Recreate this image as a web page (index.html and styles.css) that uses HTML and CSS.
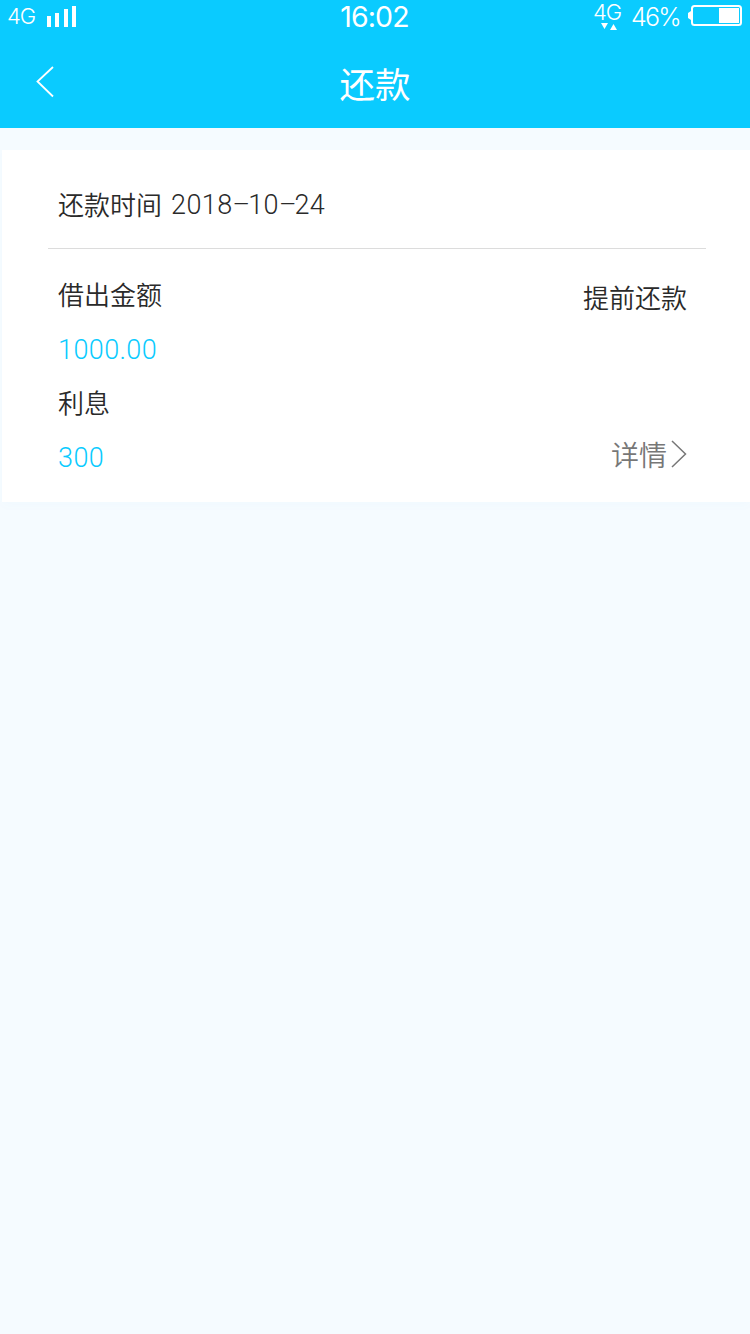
FILE: index.html
```html
<!DOCTYPE html>
<html lang="zh-CN">
<head>
<meta charset="utf-8">
<title>还款</title>
<link rel="stylesheet" href="styles.css">
</head>
<body>
<header class="header">
  <div class="status">
    <div class="status-left">
      <span class="carrier">4G</span>
      <svg class="signal" width="29" height="21" viewBox="0 0 29 21" fill="#fff"><path d="M0 10h4v11H0zM8 7h4v14H8zM17 3h4v18h-4zM25 0h4v21h-4z"/></svg>
    </div>
    <span class="clock">16:02</span>
    <div class="status-right">
      <div class="network">
        <span class="network-label">4G</span>
        <svg class="arrows" width="16" height="7" viewBox="0 0 16 7" fill="#fff"><path d="M0 0h7L3.500 6zM9 7h7L12.500 1z"/></svg>
      </div>
      <span class="percent">46%</span>
      <svg class="battery" width="54" height="21" viewBox="0 0 54 21"><rect x="4" y="1" width="49" height="19" rx="2.500" fill="none" stroke="#fff" stroke-width="2"/><path d="M31 3h20v15H31zM3 6v9L0 13V8z" fill="#fff"/></svg>
    </div>
  </div>
  <div class="navbar">
    <svg class="back" width="18" height="32" viewBox="0 0 18 32" fill="none" stroke="#fff" stroke-width="1.800"><path d="M17 1L1.500 15.500L17 30.500"/></svg>
    <h1 class="title">还款</h1>
  </div>
</header>
<main class="card">
  <div class="date-row"><span>还款时间</span><span class="num date">2018<span class="dash">–</span>10<span class="dash">–</span>24</span></div>
  <div class="details">
    <div class="amounts">
      <div class="label">借出金额</div>
      <div class="value num">1000.00</div>
      <div class="label">利息</div>
      <div class="value num">300</div>
    </div>
    <div class="actions">
      <div class="repay">提前还款</div>
      <div class="more">详情<svg class="chevron" width="16" height="28" viewBox="0 0 16 28" fill="none" stroke="#777" stroke-width="1.500"><path d="M1 1L14.500 14L1 27"/></svg></div>
    </div>
  </div>
</main>
</body>
</html>
```
FILE: styles.css
```css
* { box-sizing: border-box; }
body {
  margin: 0;
  min-height: 1334px;
  background: #f5fbff;
  color: #2a2a2a;
  font-family: "Noto Sans CJK SC", sans-serif;
  font-size: 26px;
  font-weight: 350;
}
svg { display: block; flex: none; }
.header { height: 128px; background: #0acbff; color: #fff; }
.status {
  display: grid;
  grid-template-columns: 1fr auto 1fr;
  height: 36px;
  padding: 0 8px 0 7px;
  font-family: Inter, "Liberation Sans", sans-serif;
  font-weight: 350;
}
.status-left { display: flex; }
.carrier { width: 40px; font-size: 22px; line-height: 32px; letter-spacing: -1.200px; }
.signal { margin-top: 6px; }
.clock { font-size: 28.500px; font-weight: 400; line-height: 34px; letter-spacing: -0.900px; }
.status-right { display: flex; justify-content: flex-end; }
.network { width: 38px; }
.network-label { display: block; height: 23px; font-size: 22px; line-height: 25px; letter-spacing: -1.200px; }
.arrows { margin-left: 8px; }
.percent { width: 57px; font-size: 25px; line-height: 34px; letter-spacing: -1.700px; }
.battery { margin-top: 5px; }
.navbar {
  display: grid;
  grid-template-columns: 60px 1fr 60px;
  height: 92px;
}
.back { margin: 30px 0 0 36px; }
.title { margin: 0; text-align: center; font-size: 35.500px; font-weight: 400; line-height: 94px; }
.card {
  height: 352px;
  margin: 22px 0 0 2px;
  padding: 0 44px 0 46px;
  background: #fff;
  box-shadow: 0 4px 10px rgba(10, 140, 255, 0.02);
}
.num { font-family: Roboto, sans-serif; font-size: 27px; font-weight: 350; letter-spacing: 0.400px; }
.dash { display: inline-block; width: 15.600px; text-align: center; letter-spacing: -1px; }
.date-row {
  display: flex;
  gap: 9px;
  height: 99px;
  padding-left: 10px;
  border-bottom: 1px solid #dcdcdc;
  line-height: 108px;
}
.date { line-height: 111px; }
.details { display: flex; justify-content: space-between; padding: 19px 19px 0 10px; }
.label { height: 54px; line-height: 52px; }
.value { height: 54px; line-height: 57px; color: #0acbff; }
.actions { display: flex; flex-direction: column; align-items: flex-end; }
.repay { height: 158px; line-height: 58px; }
.more { display: flex; align-items: center; gap: 4px; height: 56px; color: #777; font-size: 28px; line-height: 54px; }
```
